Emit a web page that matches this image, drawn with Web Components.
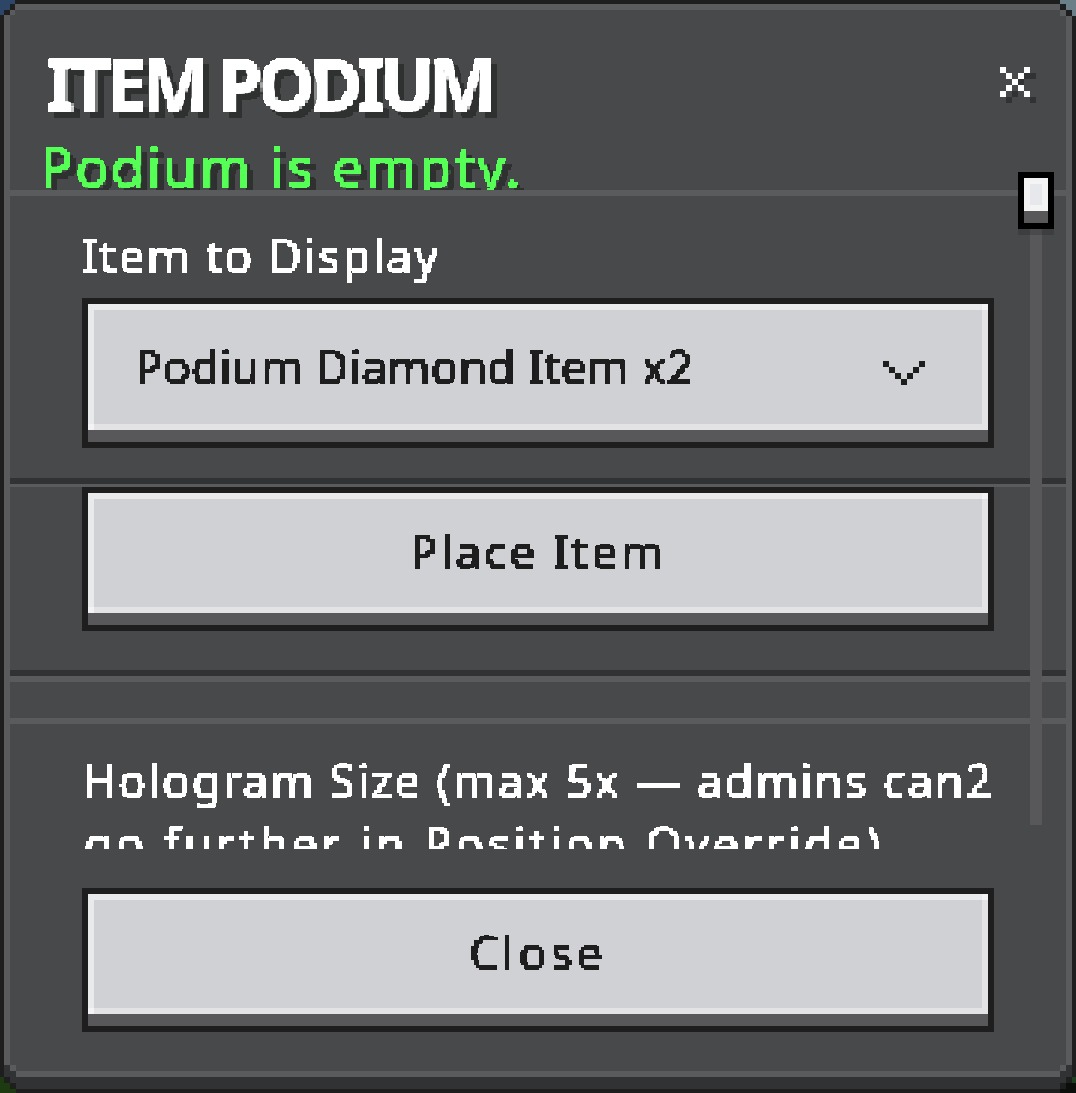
<!doctype html>
<html>
<head>
<meta charset="utf-8">
<title>Item Podium</title>
<style>
  html, body { margin: 0; padding: 0; background: #48494a; }
  body { width: 1076px; height: 1093px; overflow: hidden; }
</style>
</head>
<body>
<mc-panel>
  <mc-header slot="header">
    <mc-text slot="title" cell="6" spot="4" fit="445" size="72" weight="700" color="#ffffff" shadow="#2f3030">ITEM PODIUM</mc-text>
    <mc-text slot="status" cell="6" spot="4" fit="483" size="54" color="#55ff55" shadow="#2f3030">Podium is empty.</mc-text>
  </mc-header>

  <mc-section top="light" style="height: 282px">
    <mc-text cell="5" fit="358" size="46" color="#ffffff" style="margin-top: 32px">Item to Display</mc-text>
    <mc-button face="114" align="start" style="margin-top: 15px">
      <mc-text cell="5" fit="558" size="46" color="#1e1e1f" style="margin-bottom: 2px">Podium Diamond Item x2</mc-text>
      <mc-chevron slot="end"></mc-chevron>
    </mc-button>
  </mc-section>

  <mc-section top="split" style="height: 183px">
    <mc-button face="108">
      <mc-text cell="5" fit="256" size="46" color="#1e1e1f" style="margin-bottom: 4px">Place Item</mc-text>
    </mc-button>
  </mc-section>

  <mc-section top="split-wide" style="height: 36px"></mc-section>

  <mc-section top="light" clip style="height: 125px">
    <mc-text cell="5" fit="912" size="46" color="#ffffff" style="margin-top: 29px">Hologram Size (max 5x — admins can2</mc-text>
    <mc-text cell="5" fit="800" size="46" color="#ffffff" style="margin: 8px 0 0 2px">go further in Position Override)</mc-text>
  </mc-section>

  <mc-button slot="footer" face="108">
    <mc-text cell="5" fit="138" size="46" color="#1e1e1f" style="margin-bottom: 4px">Close</mc-text>
  </mc-button>
</mc-panel>

<script>
class McText extends HTMLElement {
  connectedCallback() {
    if (this.shadowRoot) return;
    const cell = Number(this.getAttribute("cell") ?? 5);
    const spot = Number(this.getAttribute("spot") ?? 3);
    const size = this.getAttribute("size") ?? 46;
    const weight = this.getAttribute("weight") ?? 400;
    const color = this.getAttribute("color") ?? "#fff";
    const shadow = this.getAttribute("shadow");
    // sample a block of every cell, then grow it back to the full cell
    const grow = (cell - spot) / 2;
    this.attachShadow({ mode: "open" });
    this.shadowRoot.innerHTML = `
      <style>
        :host {
          display: block;
          width: max-content;
          font-family: "Noto Sans", "Liberation Sans", sans-serif;
          font-size: ${size}px;
          font-weight: ${weight};
          line-height: ${Math.round(size * 1.2)}px;
          color: ${color};
          white-space: nowrap;
        }
        .ink {
          display: block;
          padding-right: 12px;
          margin-right: -12px;
          filter: url(#pix);
          ${shadow ? `text-shadow: ${cell}px ${cell}px 0 ${shadow};` : ""}
        }
        svg { position: absolute; width: 0; height: 0; }
      </style>
      <svg aria-hidden="true"><defs>
        <filter id="pix" x="0" y="0" width="100%" height="100%" color-interpolation-filters="sRGB">
          <feFlood x="${grow}" y="${grow}" width="${spot}" height="${spot}" flood-color="#000"></feFlood>
          <feComposite width="${cell}" height="${cell}"></feComposite>
          <feTile result="grid"></feTile>
          <feComposite in="SourceGraphic" in2="grid" operator="in"></feComposite>
          <feMorphology operator="dilate" radius="${grow}"></feMorphology>
          <feComponentTransfer>
            <feFuncA type="discrete" tableValues="0 1 1 1"></feFuncA>
          </feComponentTransfer>
        </filter>
      </defs></svg>
      <span class="ink" part="ink"><slot></slot></span>
    `;
    this.fit();
  }

  fit() {
    const target = Number(this.getAttribute("fit"));
    if (!target) return;
    const ink = this.shadowRoot.querySelector(".ink");
    const count = this.textContent.length;
    const natural = this.getBoundingClientRect().width;
    ink.style.letterSpacing = `${(target - natural) / count}px`;
  }
}
customElements.define("mc-text", McText);

class McChevron extends HTMLElement {
  constructor() {
    super();
    this.attachShadow({ mode: "open" });
    this.shadowRoot.innerHTML = `
      <style>:host { display: block; width: 42px; height: 24px; margin-top: 12px; } svg { display: block; }</style>
      <svg width="42" height="24" viewBox="0 0 7 4" shape-rendering="crispEdges" fill="#1e1e1f">
        <path d="M0 0h1v1H0zM1 1h1v1H1zM2 2h1v1H2zM3 3h1v1H3zM4 2h1v1H4zM5 1h1v1H5zM6 0h1v1H6z"/>
      </svg>`;
  }
}
customElements.define("mc-chevron", McChevron);

class McClose extends HTMLElement {
  constructor() {
    super();
    this.attachShadow({ mode: "open" });
    this.shadowRoot.innerHTML = `
      <style>:host { display: block; width: 36px; height: 36px; } svg { display: block; }</style>
      <svg width="36" height="36" viewBox="0 0 6 6" shape-rendering="crispEdges">
        <path fill="#313233" d="M1 5h1v1H1zM2 4h1v1H2zM3 2h1v1H3zM4 1h1v1H4zM5 1h1v1H5zM5 5h1v1H5z"/>
        <path fill="#ffffff" d="M0 0h1v1H0zM1 1h1v1H1zM2 2h1v1H2zM3 3h1v1H3zM4 4h1v1H4zM4 0h1v1H4zM3 1h1v1H3zM1 3h1v1H1zM0 4h1v1H0z"/>
      </svg>`;
  }
}
customElements.define("mc-close", McClose);

class McButton extends HTMLElement {
  connectedCallback() {
    if (this.shadowRoot) return;
    const face = this.getAttribute("face") ?? 108;
    const start = this.getAttribute("align") === "start";
    this.attachShadow({ mode: "open" });
    this.shadowRoot.innerHTML = `
      <style>
        :host { display: block; width: 900px; border: 6px solid #1e1e1f; background: #58585a; padding-bottom: 12px; }
        .face {
          box-sizing: border-box;
          height: ${Number(face) + 12}px;
          display: flex;
          align-items: center;
          justify-content: ${start ? "space-between" : "center"};
          padding: ${start ? "0 63px 0 47px" : "0"};
          background:
            linear-gradient(#f3f3f5, #f3f3f5) left bottom / 6px 6px no-repeat,
            linear-gradient(#f3f3f5, #f3f3f5) right top / 6px 6px no-repeat,
            linear-gradient(#e9eaec, #e9eaec) left top / 100% 6px no-repeat,
            linear-gradient(#e9eaec, #e9eaec) left top / 6px 100% no-repeat,
            linear-gradient(#e3e3e5, #e3e3e5) left bottom / 100% 6px no-repeat,
            linear-gradient(#e3e3e5, #e3e3e5) right top / 6px 100% no-repeat,
            #d0d1d4;
        }
      </style>
      <div class="face"><slot></slot><slot name="end"></slot></div>`;
  }
}
customElements.define("mc-button", McButton);

class McSection extends HTMLElement {
  connectedCallback() {
    if (this.shadowRoot) return;
    const top = this.getAttribute("top");
    const rule = {
      light: "border-top: 6px solid #5a5b5c;",
      split: "border-top: 6px solid #313233; box-shadow: inset 0 3px 0 #5a5b5c; padding-top: 3px;",
      "split-wide": "border-top: 6px solid #313233; box-shadow: inset 0 6px 0 #5a5b5c; padding-top: 6px;",
    }[top] ?? "";
    this.attachShadow({ mode: "open" });
    this.shadowRoot.innerHTML = `
      <style>
        :host {
          display: block;
          box-sizing: content-box;
          padding-left: 72px;
          ${rule}
          ${this.hasAttribute("clip") ? "overflow: hidden;" : ""}
        }
      </style>
      <slot></slot>`;
  }
}
customElements.define("mc-section", McSection);

class McHeader extends HTMLElement {
  constructor() {
    super();
    this.attachShadow({ mode: "open" });
    this.shadowRoot.innerHTML = `
      <style>
        :host { display: block; height: 180px; overflow: hidden; position: relative; }
        .title { padding: 30px 0 0 37px; }
        .status { padding: 8px 0 0 30px; }
        .x { position: absolute; left: 990px; top: 57px; }
      </style>
      <div class="title"><slot name="title"></slot></div>
      <div class="status"><slot name="status"></slot></div>
      <mc-close class="x"></mc-close>`;
  }
}
customElements.define("mc-header", McHeader);

class McScrollbar extends HTMLElement {
  constructor() {
    super();
    this.attachShadow({ mode: "open" });
    this.shadowRoot.innerHTML = `
      <style>
        :host { display: block; position: absolute; left: 1014px; top: 168px; width: 36px; height: 653px; }
        .track { position: absolute; left: 12px; top: 0; bottom: 0; width: 12px; background: #58585a; }
        .drop { position: absolute; left: 0; top: 57px; width: 36px; height: 6px; background: rgba(0, 0, 0, 0.15); }
        .thumb {
          position: absolute; left: 0; top: 0;
          box-sizing: border-box; width: 36px; height: 57px;
          border: 6px solid #000;
          background:
            linear-gradient(#e6e8eb, #e6e8eb) 6px 6px / 12px 21px no-repeat,
            linear-gradient(#f4f4f5, #f4f4f5) 0 0 / 100% 33px no-repeat,
            #58585a;
        }
      </style>
      <div class="track"></div>
      <div class="drop"></div>
      <div class="thumb"></div>`;
  }
}
customElements.define("mc-scrollbar", McScrollbar);

class McPanel extends HTMLElement {
  constructor() {
    super();
    this.attachShadow({ mode: "open" });
    this.shadowRoot.innerHTML = `
      <style>
        :host {
          display: block;
          position: relative;
          box-sizing: border-box;
          width: 1076px;
          height: 1093px;
          border: 4px solid #1e1e1f;
          background: #48494a;
        }
        .frame { height: 100%; box-sizing: border-box; border-bottom: 12px solid #313233; }
        .inner {
          height: 100%;
          box-sizing: border-box;
          border: 6px solid #5a5b5c;
          background: #48494a;
          display: flex;
          flex-direction: column;
        }
        .footer { padding: 39px 0 0 72px; }
        .corners { position: absolute; left: -4px; top: -4px; pointer-events: none; }
      </style>
      <div class="frame">
        <div class="inner">
          <slot name="header"></slot>
          <slot></slot>
          <div class="footer"><slot name="footer"></slot></div>
        </div>
      </div>
      <mc-scrollbar></mc-scrollbar>
      <svg class="corners" width="1076" height="1093" viewBox="0 0 1076 1093" shape-rendering="crispEdges">
        <path fill="#2d4668" d="M0 0h15v4H10v6H4v5H0z"/>
        <path fill="#1e1e1f" d="M10 4h5v6h-5zM4 10h6v5H4z"/>
        <path fill="#5a5b5c" d="M10 10h5v5h-5z"/>

        <path fill="#6b7f88" d="M1060 0h16v16h-4V10h-6V4h-6z"/>
        <path fill="#1e1e1f" d="M1060 4h6v6h-6zM1066 10h6v6h-6z"/>
        <path fill="#5a5b5c" d="M1060 10h6v6h-6z"/>

        <path fill="#1e3a10" d="M0 1077h4v6h6v6h6v4H0z"/>
        <path fill="#313233" d="M4 1065h6v12H4zM10 1071h6v12h-6z"/>
        <path fill="#1e1e1f" d="M4 1077h6v6H4zM10 1083h6v6h-6z"/>
        <path fill="#5a5b5c" d="M10 1065h6v6h-6z"/>

        <path fill="#313233" d="M1066 1065h6v12h-6zM1060 1071h6v12h-6z"/>
        <path fill="#1e1e1f" d="M1066 1077h6v6h-6zM1060 1083h6v6h-6z"/>
        <path fill="#5a5b5c" d="M1060 1065h6v6h-6z"/>
        <path fill="#1c4020" d="M1072 1077h4v6h-4z"/>
        <path fill="#0c0e0c" d="M1066 1083h10v10h-16v-4h6z"/>
      </svg>`;
  }
}
customElements.define("mc-panel", McPanel);
</script>
</body>
</html>
